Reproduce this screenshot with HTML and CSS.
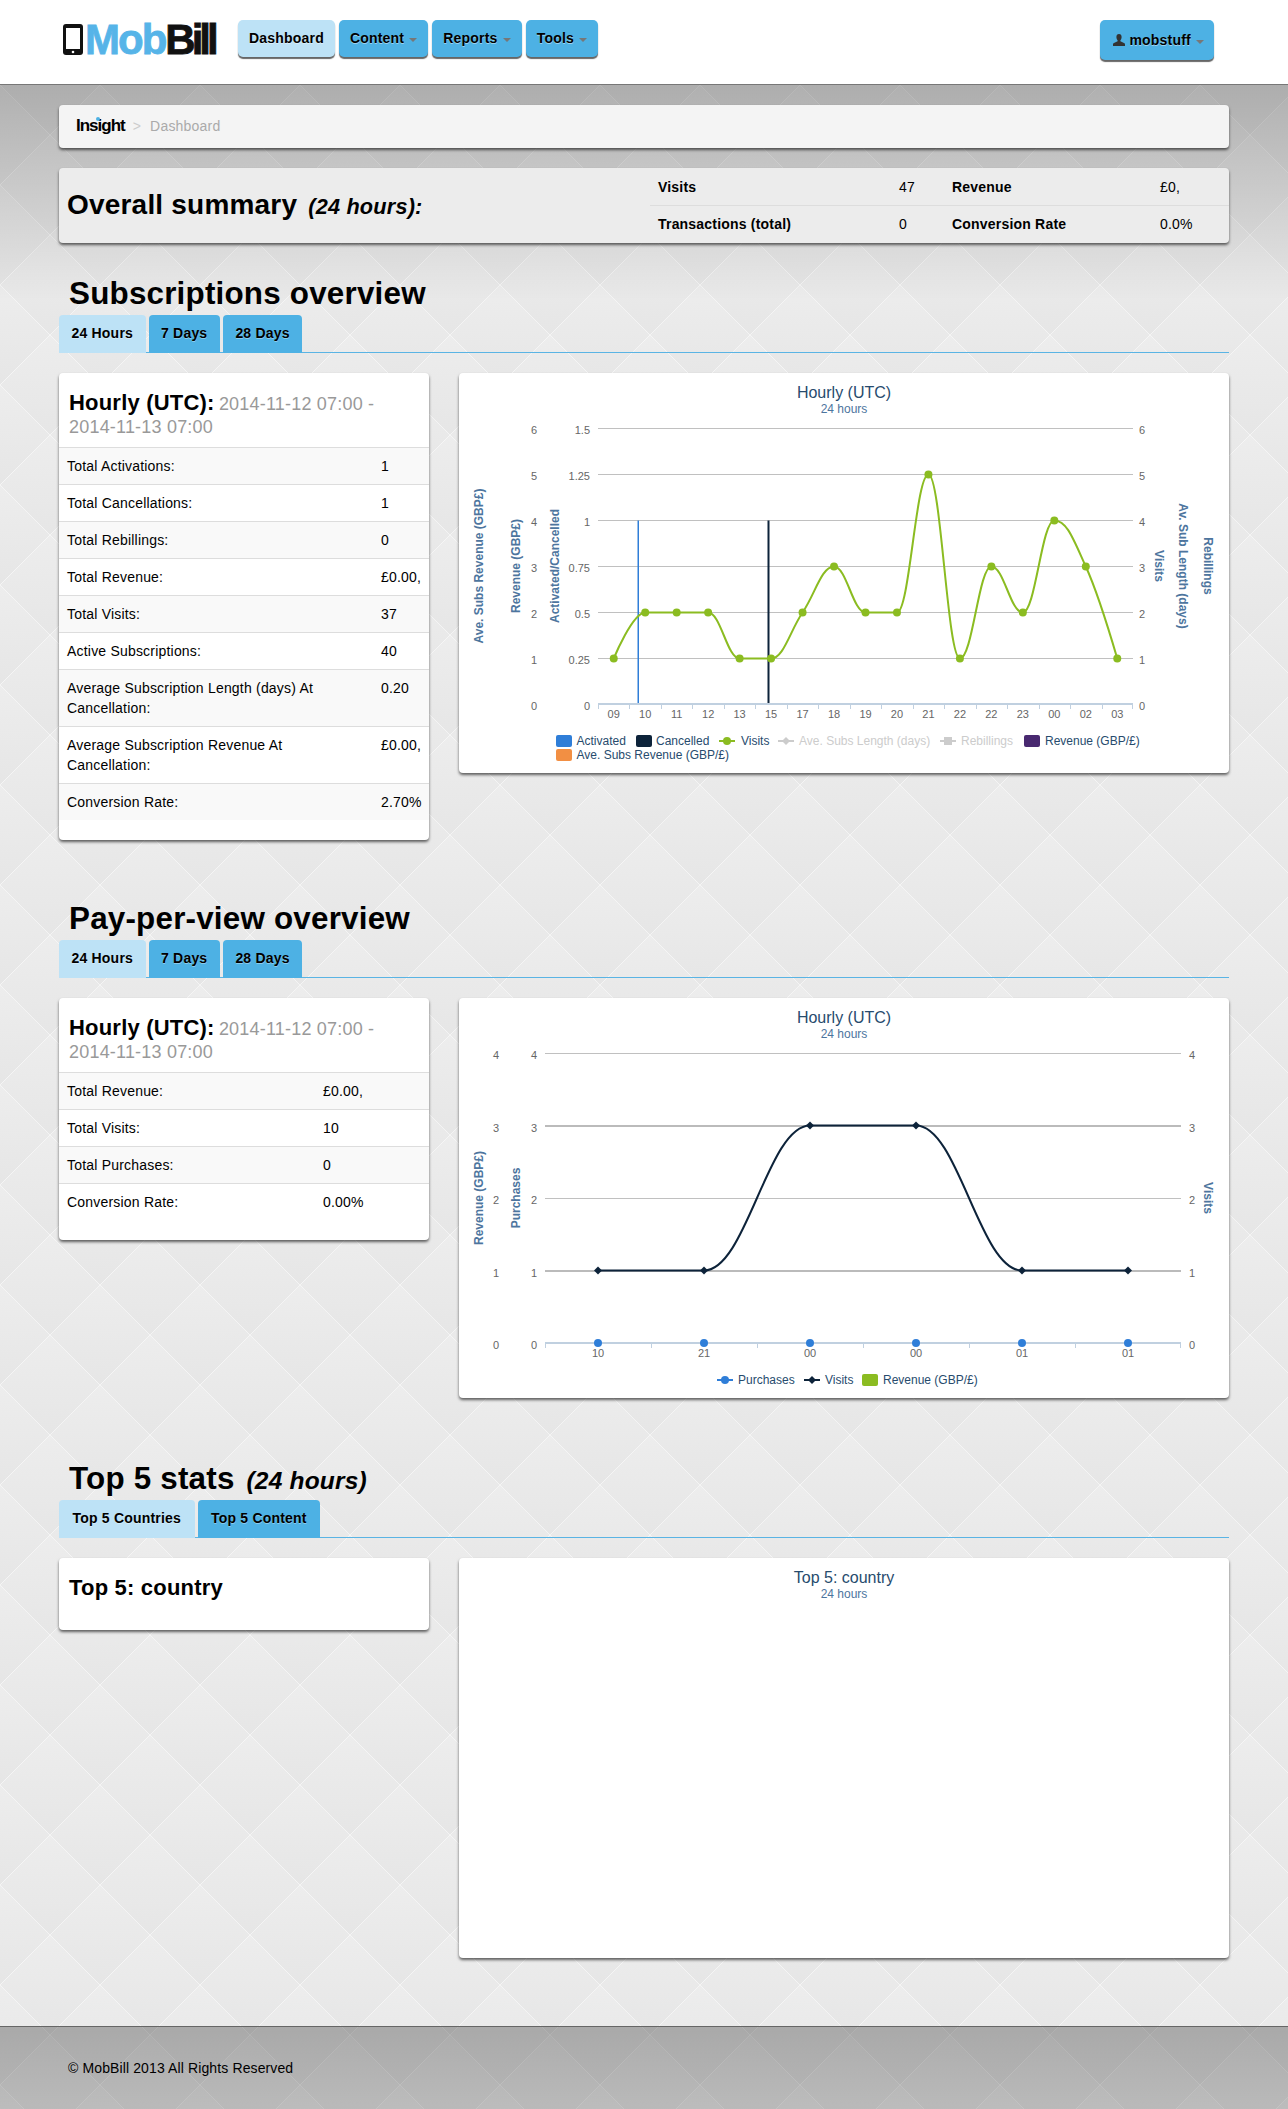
FILE: index.html
```html
<!DOCTYPE html>
<html lang="en">
<head>
    <meta charset="UTF-8">
    <meta name="viewport" content="width=device-width, initial-scale=1.0">
    <title>MobBill Insight - Dashboard</title>
    <link rel="stylesheet" href="styles.css">
</head>
<body>
    <!-- Top navigation -->
    <header class="topbar">
        <a class="logo" href="#">
            <svg class="logo-phone" viewBox="0 0 20 31" width="20" height="31">
                <rect width="20" height="31" rx="3" fill="#111"></rect>
                <rect x="3" y="4" width="14" height="21" fill="#fff"></rect>
                <circle cx="10" cy="28" r="1.3" fill="#fff"></circle>
            </svg>
            <span class="logo-mob">Mob</span><span class="logo-bill">Bill</span>
        </a>
        <nav class="nav">
            <a class="btn btn-active" href="#">Dashboard</a>
            <a class="btn" href="#">Content <span class="caret"></span></a>
            <a class="btn" href="#">Reports <span class="caret"></span></a>
            <a class="btn" href="#">Tools <span class="caret"></span></a>
        </nav>
        <a class="btn btn-user" href="#">
            <svg class="user-icon" viewBox="0 0 12 12" width="12" height="12">
                <path d="M6 0C4.3 0 3.4 1.2 3.4 3c0 1.4.6 2.6 1.2 3.2v1L1 9c-.7.3-1 .7-1 1.5V12h12v-1.5c0-.8-.3-1.2-1-1.5L7.4 7.2v-1C8 5.6 8.6 4.4 8.6 3 8.6 1.2 7.7 0 6 0z" fill="#333"></path>
            </svg>
            mobstuff <span class="caret"></span>
        </a>
    </header>

    <main class="container">
        <div class="crumbs">
            <span class="insight">Insight</span>
            <span class="crumb-sep">&gt;</span>
            <span class="crumb-page">Dashboard</span>
        </div>

        <!-- Overall summary -->
        <div class="summary">
            <h2 class="summary-title">Overall summary <em>(24 hours):</em></h2>
            <table class="summary-stats">
                <tr>
                    <th class="s-label-a">Visits</th>
                    <td class="s-val-a">47</td>
                    <th class="s-label-b">Revenue</th>
                    <td>£0,</td>
                </tr>
                <tr>
                    <th>Transactions (total)</th>
                    <td>0</td>
                    <th>Conversion Rate</th>
                    <td>0.0%</td>
                </tr>
            </table>
        </div>

        <!-- Subscriptions -->
        <section class="section">
            <h2 class="section-title">Subscriptions overview</h2>
            <div class="tabs">
                <a class="tab tab-active" href="#">24 Hours</a>
                <a class="tab" href="#">7 Days</a>
                <a class="tab" href="#">28 Days</a>
            </div>
            <div class="panels">
                <div class="card">
                    <h3 class="card-title">Hourly (UTC): <small>2014-11-12 07:00 -</small> <small>2014-11-13 07:00</small></h3>
                    <table class="stats stats-wide">
                        <tr><td>Total Activations:</td><td>1</td></tr>
                        <tr><td>Total Cancellations:</td><td>1</td></tr>
                        <tr><td>Total Rebillings:</td><td>0</td></tr>
                        <tr><td>Total Revenue:</td><td>£0.00,</td></tr>
                        <tr><td>Total Visits:</td><td>37</td></tr>
                        <tr><td>Active Subscriptions:</td><td>40</td></tr>
                        <tr><td>Average Subscription Length (days) At Cancellation:</td><td>0.20</td></tr>
                        <tr><td>Average Subscription Revenue At Cancellation:</td><td>£0.00,</td></tr>
                        <tr><td>Conversion Rate:</td><td>2.70%</td></tr>
                    </table>
                </div>
                <div class="chart-panel" id="chart-subs"></div>
            </div>
        </section>

        <!-- Pay-per-view -->
        <section class="section">
            <h2 class="section-title">Pay-per-view overview</h2>
            <div class="tabs">
                <a class="tab tab-active" href="#">24 Hours</a>
                <a class="tab" href="#">7 Days</a>
                <a class="tab" href="#">28 Days</a>
            </div>
            <div class="panels">
                <div class="card">
                    <h3 class="card-title">Hourly (UTC): <small>2014-11-12 07:00 -</small> <small>2014-11-13 07:00</small></h3>
                    <table class="stats stats-narrow">
                        <tr><td>Total Revenue:</td><td>£0.00,</td></tr>
                        <tr><td>Total Visits:</td><td>10</td></tr>
                        <tr><td>Total Purchases:</td><td>0</td></tr>
                        <tr><td>Conversion Rate:</td><td>0.00%</td></tr>
                    </table>
                </div>
                <div class="chart-panel" id="chart-ppv"></div>
            </div>
        </section>

        <!-- Top 5 -->
        <section class="section section-top5">
            <h2 class="section-title">Top 5 stats <em>(24 hours)</em></h2>
            <div class="tabs">
                <a class="tab tab-wide tab-active" href="#">Top 5 Countries</a>
                <a class="tab tab-wide" href="#">Top 5 Content</a>
            </div>
            <div class="panels">
                <div class="card card-empty">
                    <h3 class="card-title">Top 5: country</h3>
                </div>
                <div class="chart-panel" id="chart-top5"></div>
            </div>
        </section>
    </main>

    <footer class="footer">© MobBill 2013 All Rights Reserved</footer>

    <script src="chart.js"></script>
</body>
</html>
```

FILE: styles.css
```css
* {
    box-sizing: border-box;
}

body {
    margin: 0;
    font-family: "Liberation Sans", Arial, sans-serif;
    font-size: 14px;
    line-height: 20px;
    letter-spacing: 0.2px;
    color: #000;
    background-color: #e9e9e9;
    /* page shadow under the top bar, then the diamond tile */
    background-image:
        linear-gradient(rgba(0, 0, 0, 0.26) 85px, rgba(0, 0, 0, 0) 300px),
        url("data:image/svg+xml,%3Csvg xmlns='http://www.w3.org/2000/svg' width='100' height='100'%3E%3Cdefs%3E%3ClinearGradient id='d' x1='0' y1='0' x2='0' y2='1'%3E%3Cstop offset='0' stop-color='%23ededed'/%3E%3Cstop offset='1' stop-color='%23e6e6e6'/%3E%3C/linearGradient%3E%3C/defs%3E%3Cg fill='url(%23d)' stroke='%23fff' stroke-opacity='.4'%3E%3Cpath d='M0 0L50 50L0 100L-50 50Z'/%3E%3Cpath d='M100 0L150 50L100 100L50 50Z'/%3E%3Cpath d='M50 -50L100 0L50 50L0 0Z'/%3E%3Cpath d='M50 50L100 100L50 150L0 100Z'/%3E%3C/g%3E%3C/svg%3E");
    background-size: 100% 300px, 100px 100px;
    background-position: 0 0, 0 -15px;
    background-repeat: no-repeat, repeat;
}

a {
    color: inherit;
    text-decoration: none;
}

/* Top bar */
.topbar {
    display: flex;
    align-items: flex-start;
    height: 85px;
    padding: 20px 74px 0 63px;
    background: #fff;
    border-bottom: 1px solid #777;
}

.logo {
    display: flex;
    align-items: center;
    width: 175px;
    height: 35px;
    margin-top: 2px;
    font-size: 42px;
    font-weight: bold;
    -webkit-text-stroke: 0.8px currentColor;
}

.logo-phone {
    margin-right: 2px;
    flex: none;
}

.logo-mob {
    letter-spacing: -2px;
    color: #56b4e8;
}

.logo-bill {
    letter-spacing: -4px;
    color: #111;
}

.nav {
    display: flex;
    gap: 4px;
}

.btn {
    display: block;
    height: 37px;
    padding: 0 11px;
    line-height: 36px;
    font-weight: bold;
    background: #4db1e4;
    border-radius: 5px;
    box-shadow: 0 2px 1px #666;
    text-shadow: 0 1px 0 rgba(255, 255, 255, 0.45);
}

.btn-active {
    background: #bde2f6;
}

.btn-user {
    height: 40px;
    margin-left: auto;
    line-height: 41px;
    padding: 0 10px 0 13px;
    white-space: nowrap;
}

.user-icon {
    vertical-align: -1px;
}

.caret {
    display: inline-block;
    margin-left: 1px;
    vertical-align: 1px;
    border-top: 4px solid #777;
    border-left: 4px solid transparent;
    border-right: 4px solid transparent;
}

/* Page */
.container {
    width: 1170px;
    margin: 0 auto;
    padding: 20px 0 8px;
}

.crumbs {
    display: flex;
    align-items: center;
    height: 43px;
    padding: 0 0 2px 17px;
    background: #f4f4f4;
    border-radius: 4px;
    box-shadow: 0 2px 3px rgba(0, 0, 0, 0.6);
}

.insight {
    position: relative;
    font-size: 17px;
    font-weight: bold;
    letter-spacing: -1px;
}

.insight::after {
    content: "";
    position: absolute;
    left: 20px;
    top: 1px;
    width: 4px;
    height: 4px;
    border-radius: 50%;
    background: #4db1e4;
}

.crumb-sep {
    margin: 0 9px 0 8px;
    color: #ccc;
}

.crumb-page {
    color: #aaa;
}

.summary {
    display: flex;
    align-items: center;
    height: 75px;
    margin: 20px 0 32px;
    background: #ececec;
    border-radius: 4px;
    box-shadow: 0 2px 3px rgba(0, 0, 0, 0.6);
}

.summary-title {
    flex: 1;
    margin: 0 0 0 8px;
    font-size: 28px;
    line-height: 36px;
}

.summary-title em {
    margin-left: 3px;
    font-size: 21.7px;
}

.summary-stats {
    width: 579px;
    margin: 1px 0;
    border-collapse: separate;
    border-spacing: 0;
    table-layout: fixed;
}

.summary-stats th,
.summary-stats td {
    padding: 8px;
    text-align: left;
}

.summary-stats tr + tr th,
.summary-stats tr + tr td {
    border-top: 1px solid #ddd;
}

.s-label-a {
    width: 241px;
}

.s-val-a {
    width: 53px;
}

.s-label-b {
    width: 208px;
}

.section {
    margin-bottom: 60px;
}

.section-top5 {
    margin-top: 62px;
}

.section-title {
    height: 40px;
    margin: 0;
    padding-left: 10px;
    font-size: 31.4px;
    line-height: 38px;
}

.section-title em {
    margin-left: 3px;
    font-size: 24.5px;
}

.tabs {
    display: flex;
    gap: 3px;
    height: 38px;
    margin-bottom: 20px;
    border-bottom: 1px solid #5ab4e4;
}

.tab {
    height: 38px;
    padding: 0 12.5px;
    line-height: 36px;
    font-weight: bold;
    background: #4db1e4;
    border-radius: 4px 4px 0 0;
    text-shadow: 0 1px 0 rgba(255, 255, 255, 0.35);
}

.tab-wide {
    padding: 0 13.5px;
}

.tab-active {
    background: #bde2f6;
}

.panels {
    display: flex;
    align-items: flex-start;
    gap: 30px;
}

.card {
    width: 370px;
    padding-bottom: 20px;
    background: #fff;
    border-radius: 4px;
    box-shadow: 0 2px 3px rgba(0, 0, 0, 0.6);
}

.card-empty {
    height: 72px;
}

.card-title {
    margin: 0;
    padding: 18px 20px 10px 10px;
    font-size: 22px;
    line-height: 23px;
}

.card-title small {
    margin-left: -2px;
    font-size: 18px;
    line-height: 18px;
    font-weight: normal;
    white-space: nowrap;
    color: #999;
}

.card-title small + small {
    margin-left: 0;
}

.stats {
    width: 100%;
    border-collapse: separate;
    border-spacing: 0;
    table-layout: fixed;
}

.stats td {
    padding: 8px;
    vertical-align: top;
    border-top: 1px solid #ddd;
}

.stats tr:nth-child(odd) td {
    background: #f9f9f9;
}

.stats-wide td:first-child {
    width: 314px;
    padding-right: 30px;
}

.stats-narrow td:first-child {
    width: 256px;
}

/* Charts */
.chart-panel {
    width: 770px;
    height: 400px;
    background: #fff;
    border-radius: 4px;
    box-shadow: 0 2px 3px rgba(0, 0, 0, 0.6);
}

.chart-panel svg {
    display: block;
    letter-spacing: 0;
}

.chart-title {
    font-size: 16px;
    fill: #274b6d;
    text-anchor: middle;
}

.chart-sub {
    font-size: 12px;
    fill: #4d759e;
    text-anchor: middle;
}

.axis-label {
    font-size: 11px;
    fill: #666;
}

.axis-title {
    font-size: 12px;
    font-weight: bold;
    fill: #4d759e;
    text-anchor: middle;
}

.legend-text {
    font-size: 12px;
    fill: #274b6d;
}

.legend-off {
    fill: #ccc;
}

.footer {
    height: 83px;
    padding: 31px 0 0 68px;
    letter-spacing: 0.12px;
    border-top: 1px solid #666;
    background: linear-gradient(rgba(0, 0, 0, 0.28), rgba(0, 0, 0, 0.2));
}
```

FILE: chart.js
```js
// Draws the dashboard charts as inline SVG
const SVG_NS = 'http://www.w3.org/2000/svg';

const BLUE = '#2f7ed8';
const DARK = '#0d233a';
const GREEN = '#8bbc21';
const PURPLE = '#492970';
const ORANGE = '#f28f43';
const GREY = '#ccc';

function add(parent, tag, attrs, text) {
    const el = document.createElementNS(SVG_NS, tag);
    Object.keys(attrs).forEach(key => el.setAttribute(key, attrs[key]));
    if (text !== undefined) el.textContent = text;
    parent.appendChild(el);
    return el;
}

// Smooth line through points, same maths as a Highcharts spline
function splinePath(points) {
    const ctrl = points.map((p, i) => {
        const prev = points[i - 1];
        const next = points[i + 1];
        if (!prev || !next) return { lx: p.x, ly: p.y, rx: p.x, ry: p.y };
        const dx = (next.x - p.x) * 0.4;
        let ly = p.y - 0.2 * (next.y - prev.y);
        let ry = p.y + 0.2 * (next.y - prev.y);
        const lo1 = Math.min(prev.y, p.y), hi1 = Math.max(prev.y, p.y);
        if (ly > hi1) { ly = hi1; ry = 2 * p.y - ly; }
        else if (ly < lo1) { ly = lo1; ry = 2 * p.y - ly; }
        const lo2 = Math.min(next.y, p.y), hi2 = Math.max(next.y, p.y);
        if (ry > hi2) { ry = hi2; ly = 2 * p.y - ry; }
        else if (ry < lo2) { ry = lo2; ly = 2 * p.y - ry; }
        return { lx: p.x - dx, ly, rx: p.x + dx, ry };
    });
    let d = `M${points[0].x} ${points[0].y}`;
    for (let i = 1; i < points.length; i++) {
        const a = ctrl[i - 1], b = ctrl[i], p = points[i];
        d += ` C${a.rx} ${a.ry} ${b.lx} ${b.ly} ${p.x} ${p.y}`;
    }
    return d;
}

function drawHeading(svg, title) {
    add(svg, 'text', { class: 'chart-title', x: 385, y: 25 }, title);
    add(svg, 'text', { class: 'chart-sub', x: 385, y: 40 }, '24 hours');
}

function diamond(svg, x, y, r, color) {
    add(svg, 'polygon', { points: `${x},${y - r} ${x + r},${y} ${x},${y + r} ${x - r},${y}`, fill: color });
}

function drawMarker(svg, kind, x, y, color) {
    if (kind === 'circle') add(svg, 'circle', { cx: x, cy: y, r: 4, fill: color });
    if (kind === 'diamond') diamond(svg, x, y, 4, color);
    if (kind === 'square') add(svg, 'rect', { x: x - 4, y: y - 4, width: 8, height: 8, fill: color });
}

function drawLegend(svg, items) {
    items.forEach(item => {
        if (item.marker) {
            add(svg, 'rect', { x: item.x, y: item.y - 5, width: 16, height: 2, fill: item.color });
            drawMarker(svg, item.marker, item.x + 8, item.y - 4, item.color);
        } else {
            add(svg, 'rect', { x: item.x, y: item.y - 10, width: 16, height: 12, rx: 2, fill: item.color });
        }
        add(svg, 'text', { class: 'legend-text' + (item.off ? ' legend-off' : ''), x: item.textX, y: item.y }, item.text);
    });
}

function drawChart(id, cfg) {
    const svg = add(document.getElementById(id), 'svg', { width: 770, height: 400 });
    drawHeading(svg, cfg.title);

    // grid and value labels
    cfg.gridY.forEach(row => {
        add(svg, 'line', {
            x1: cfg.left, x2: cfg.left + cfg.width, y1: row.y, y2: row.y,
            stroke: row.w ? '#bbb' : '#c0c0c0', 'stroke-width': row.w || 1
        });
    });
    cfg.labels.forEach(col => {
        col.values.forEach((value, i) => {
            add(svg, 'text', { class: 'axis-label', x: col.x, y: cfg.labelY[i], 'text-anchor': col.anchor }, value);
        });
    });

    // rotated axis titles
    cfg.axisTitles.forEach(t => {
        add(svg, 'text', {
            class: 'axis-title', x: t.x, y: cfg.axisMid,
            transform: `rotate(${t.right ? 90 : -90} ${t.x} ${cfg.axisMid})`
        }, t.text);
    });

    (cfg.bars || []).forEach(b => {
        add(svg, 'rect', { x: b.x, y: b.y, width: b.w, height: cfg.base - b.y, fill: b.color });
    });

    // x axis
    add(svg, 'rect', { x: cfg.left, y: cfg.base - 1, width: cfg.width, height: 2, fill: '#c0d0e0' });
    const step = cfg.width / cfg.cats.length;
    cfg.cats.forEach((cat, i) => {
        const tick = Math.round(cfg.left + i * step) + 0.5;
        add(svg, 'line', { x1: tick, x2: tick, y1: cfg.base, y2: cfg.base + 5, stroke: '#c0d0e0' });
        add(svg, 'text', { class: 'axis-label', x: cfg.left + (i + 0.5) * step, y: cfg.catY, 'text-anchor': 'middle' }, cat);
    });
    const end = cfg.left + cfg.width - 0.5;
    add(svg, 'line', { x1: end, x2: end, y1: cfg.base, y2: cfg.base + 5, stroke: '#c0d0e0' });

    // series
    cfg.series.forEach(s => {
        const points = s.ys.map((y, i) => ({ x: cfg.left + (i + 0.5) * step, y }));
        if (s.line !== false) {
            add(svg, 'path', { d: splinePath(points), fill: 'none', stroke: s.color, 'stroke-width': 2 });
        }
        points.forEach(p => drawMarker(svg, s.marker, p.x, p.y, s.color));
    });

    drawLegend(svg, cfg.legend);
}

// Subscriptions chart
const subsBase = 331.5;
const subsY = v => subsBase - v * 184;

drawChart('chart-subs', {
    title: 'Hourly (UTC)',
    left: 139,
    width: 535,
    base: 331,
    catY: 345,
    axisMid: 193,
    gridY: [55.5, 101.5, 147.5, 193.5, 239.5, 285.5].map(y => ({ y })),
    labelY: [61, 107, 153, 199, 245, 291, 337],
    labels: [
        { x: 78, anchor: 'end', values: ['6', '5', '4', '3', '2', '1', '0'] },
        { x: 131, anchor: 'end', values: ['1.5', '1.25', '1', '0.75', '0.5', '0.25', '0'] },
        { x: 680, anchor: 'start', values: ['6', '5', '4', '3', '2', '1', '0'] }
    ],
    axisTitles: [
        { x: 24, text: 'Ave. Subs Revenue (GBP£)' },
        { x: 61, text: 'Revenue (GBP£)' },
        { x: 100, text: 'Activated/Cancelled' },
        { x: 696, right: true, text: 'Visits' },
        { x: 720, right: true, text: 'Av. Sub Length (days)' },
        { x: 745, right: true, text: 'Rebillings' }
    ],
    bars: [
        { x: 178.5, y: 147.5, w: 1.5, color: BLUE },
        { x: 308.5, y: 147.5, w: 2, color: DARK }
    ],
    cats: ['09', '10', '11', '12', '13', '15', '17', '18', '19', '20', '21', '22', '22', '23', '00', '02', '03'],
    series: [{
        color: GREEN,
        marker: 'circle',
        ys: [0.25, 0.5, 0.5, 0.5, 0.25, 0.25, 0.5, 0.75, 0.5, 0.5, 1.25, 0.25, 0.75, 0.5, 1, 0.75, 0.25].map(subsY)
    }],
    legend: [
        { x: 97, y: 372, textX: 117.5, color: BLUE, text: 'Activated' },
        { x: 177, y: 372, textX: 197, color: DARK, text: 'Cancelled' },
        { x: 260, y: 372, textX: 282, color: GREEN, marker: 'circle', text: 'Visits' },
        { x: 319, y: 372, textX: 340, color: GREY, marker: 'diamond', off: true, text: 'Ave. Subs Length (days)' },
        { x: 481, y: 372, textX: 502, color: GREY, marker: 'square', off: true, text: 'Rebillings' },
        { x: 565, y: 372, textX: 586, color: PURPLE, text: 'Revenue (GBP/£)' },
        { x: 97, y: 386, textX: 117.5, color: ORANGE, text: 'Ave. Subs Revenue (GBP/£)' }
    ]
});

// Pay-per-view chart
drawChart('chart-ppv', {
    title: 'Hourly (UTC)',
    left: 86,
    width: 636,
    base: 345,
    catY: 359,
    axisMid: 200,
    gridY: [{ y: 55.5 }, { y: 128, w: 2 }, { y: 200.5 }, { y: 273, w: 2 }],
    labelY: [61, 134, 206, 279, 351],
    labels: [
        { x: 40, anchor: 'end', values: ['4', '3', '2', '1', '0'] },
        { x: 78, anchor: 'end', values: ['4', '3', '2', '1', '0'] },
        { x: 730, anchor: 'start', values: ['4', '3', '2', '1', '0'] }
    ],
    axisTitles: [
        { x: 24, text: 'Revenue (GBP£)' },
        { x: 61, text: 'Purchases' },
        { x: 745, right: true, text: 'Visits' }
    ],
    cats: ['10', '21', '00', '00', '01', '01'],
    series: [
        { color: BLUE, marker: 'circle', line: false, ys: [345, 345, 345, 345, 345, 345] },
        { color: DARK, marker: 'diamond', ys: [272.5, 272.5, 127.5, 127.5, 272.5, 272.5] }
    ],
    legend: [
        { x: 258, y: 386, textX: 279, color: BLUE, marker: 'circle', text: 'Purchases' },
        { x: 345, y: 386, textX: 366, color: DARK, marker: 'diamond', text: 'Visits' },
        { x: 403, y: 386, textX: 424, color: GREEN, text: 'Revenue (GBP/£)' }
    ]
});

// Top 5 chart has a heading and no data
drawHeading(add(document.getElementById('chart-top5'), 'svg', { width: 770, height: 400 }), 'Top 5: country');
```
